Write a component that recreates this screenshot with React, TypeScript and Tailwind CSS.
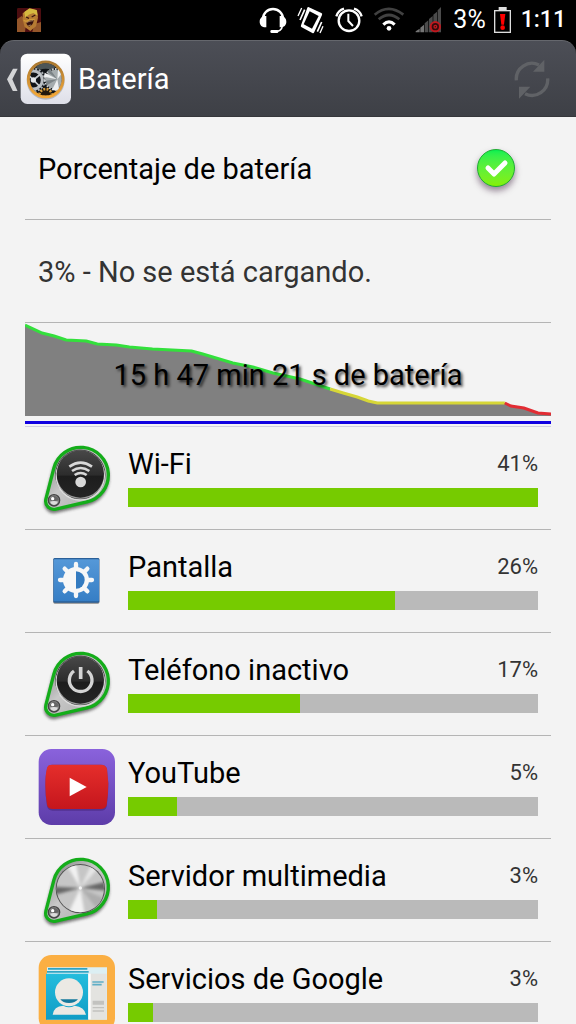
import { useState } from "react";
import type { ReactNode } from "react";

function BarbarianIcon() {
  return (
    <svg className="h-6 w-6" viewBox="0 0 72 72" aria-hidden="true">
      <rect width="72" height="72" rx="4" fill="#4c0d10" />
      <path d="M0 34 14 24 28 40 24 72H0zM52 48l20-6v30H46z" fill="#94562a" />
      <path d="M17 16 36 2l24 5 3 22-6 26-17 14-17-12-6-22z" fill="#b67b33" />
      <path d="M22 12 38 1l21 5 3 17-13-8-14 5-10 9z" fill="#d6b93f" />
      <path d="m27 27 9 4m8-4 11-6" stroke="#3a1610" strokeWidth="4" />
      <path d="M28 45q8-9 22-11 0 18-14 22-6-3-8-11z" fill="#35100d" />
      <path d="M30 43q9-5 18-5M34 53l8-2" stroke="#d9b886" strokeWidth="2" fill="none" />
      <path d="m20 37 7 3 12-5 14-1" stroke="#d09b39" strokeWidth="4" fill="none" />
    </svg>
  );
}

function HeadsetIcon() {
  return (
    <svg className="h-7 w-7" viewBox="22 18 84 84" fill="none" aria-hidden="true">
      <path d="M34 62V56a30 29 0 0 1 60 0v6" stroke="#fff" strokeWidth="7" />
      <path d="M44 48v34c-12 1-20-6-20-17s8-18 20-17zM84 48v34c12 1 20-6 20-17s-8-18-20-17z" fill="#fff" />
      <path d="M92 78q-2 17-24 17" stroke="#fff" strokeWidth="5" />
      <rect x="56" y="90" width="24" height="9" rx="4" fill="#fff" />
    </svg>
  );
}

function VibrateIcon() {
  return (
    <svg className="h-7 w-7" viewBox="136 18 84 84" fill="none" stroke="#fff" aria-hidden="true">
      <path d="m170 21 39 18q4 2 2 6l-23 51q-2 5-6 3l-32-17q-4-2-2-6l18-50q1-6 4-5z" fill="#fff" stroke="none" />
      <path d="m174 34 27 14-20 38-25-13z" fill="#000" stroke="none" />
      <path d="m145 60 14-31M197 95l13-29" strokeWidth="5" />
      <path d="m139 48 11-24M205 99l9-20" strokeWidth="4" />
    </svg>
  );
}

function AlarmIcon() {
  return (
    <svg className="h-7 w-7" viewBox="251 18 84 84" fill="none" stroke="#fff" aria-hidden="true">
      <circle cx="293" cy="62" r="31" strokeWidth="7" />
      <path d="M291 41v22l14 15" strokeWidth="6" />
      <path d="M255 49q5-17 23-23M308 26q18 6 23 23" strokeWidth="7" />
    </svg>
  );
}

function WifiStatusIcon() {
  return (
    <svg className="h-7 w-8" viewBox="358 15 96 84" fill="none" aria-hidden="true">
      <path d="M363 41q42-35 86 0M375 55q31-26 62 0" stroke="#414141" strokeWidth="8" />
      <path d="M389 71q17-17 34 0" stroke="#fff" strokeWidth="9" />
      <circle cx="406" cy="82" r="7" fill="#fff" />
    </svg>
  );
}

function SignalIcon() {
  return (
    <svg className="h-7 w-7" viewBox="482 15 84 84" aria-hidden="true">
      <path d="M484 94v-3l12-8v11zM498 94V80l11-9v23z" fill="#747474" />
      <path d="M511 94V67l11-9v36zM524 94V54l11-9v49zM537 94V41l11-9v62zM550 94V28l10-10v76z" fill="#4b4b4b" />
      <circle cx="543" cy="77" r="14" fill="#340b0b" stroke="#c0181f" strokeWidth="6" />
      <circle cx="543" cy="77" r="4" fill="none" stroke="#c0181f" strokeWidth="4" />
    </svg>
  );
}

function LowBatteryIcon() {
  return (
    <svg className="h-7 w-[19px]" viewBox="714 15 57 84" aria-hidden="true">
      <path d="M728 18h24v9h13v69h-51V27h14z" fill="#ddd" />
      <path d="M718 31h43v61h-43z" fill="#000" />
      <path d="M732 39h16l-4 32h-8z" fill="#f00" />
      <circle cx="740" cy="80" r="7" fill="#f00" />
    </svg>
  );
}

function SettingsLogo() {
  return (
    <svg className="h-[52px] w-[52px]" viewBox="60 157 156 156" aria-hidden="true">
      <defs>
        <linearGradient id="logo-bg" x2="0" y2="1">
          <stop stopColor="#fff" />
          <stop offset="1" stopColor="#dedfe8" />
        </linearGradient>
        <linearGradient id="gold" x2="0" y2="1">
          <stop stopColor="#a97831" />
          <stop offset="1" stopColor="#f4a838" />
        </linearGradient>
        <clipPath id="logo-face">
          <circle cx="137" cy="236" r="48" />
        </clipPath>
      </defs>
      <rect x="62" y="159" width="151" height="151" rx="20" fill="url(#logo-bg)" />
      <circle cx="137" cy="240" r="57" fill="#000" opacity=".2" />
      <circle cx="137" cy="236" r="52" fill="#101418" stroke="url(#gold)" strokeWidth="9" />
      <g clipPath="url(#logo-face)">
        <path d="M104 196q33-20 66 0l-14 12q-19-8-38 0z" fill="#4c5557" />
        <circle cx="100" cy="238" r="27" fill="none" stroke="#b9bec2" strokeWidth="9" />
        <circle cx="100" cy="238" r="34" fill="none" stroke="#a9afb3" strokeWidth="6" strokeDasharray="6 5" />
        <path d="m82 220 38 38M100 238l22-18" stroke="#c5cacd" strokeWidth="5" />
        <circle cx="100" cy="238" r="8" fill="#e4e7e9" />
        <circle cx="166" cy="236" r="29" fill="#a5acae" />
        <circle cx="166" cy="236" r="31" fill="none" stroke="#cdd1d3" strokeWidth="6" strokeDasharray="5 4" />
        <path d="m172 236-38-20-2 12zM172 236l-16 32 22 3zM172 236l18-24-16-8z" fill="#eef0f1" />
        <path d="m172 236-36 4 4 14zM172 236l-22-30-10 6z" fill="#7b8386" />
        <circle cx="137" cy="284" r="19" fill="#23190c" stroke="#d69d3d" strokeWidth="8" strokeDasharray="6 4" />
      </g>
    </svg>
  );
}

function SyncIcon() {
  return (
    <svg className="h-10 w-10" viewBox="767 176 120 120" fill="none" aria-hidden="true">
      <path d="M780 240A47 47 0 0 1 848 194M874 234A47 47 0 0 1 806 280" stroke="#606266" strokeWidth="10" />
      <path d="M864 178v36h-34zM788 295v-36h34z" fill="#606266" />
    </svg>
  );
}

function Knob({ id, dark, children }: { id: string; dark: boolean; children?: ReactNode }) {
  return (
    <svg className="size-full" viewBox="24 15 231 231" aria-hidden="true">
      <defs>
        <linearGradient id={`${id}-rim`} x2="1" y2="1">
          <stop stopColor="#777" />
          <stop offset=".45" stopColor="#c8c8c8" />
          <stop offset="1" stopColor="#a8a8a8" />
        </linearGradient>
        <linearGradient id={`${id}-cap`} x2="0" y2="1">
          <stop stopColor="#484848" />
          <stop offset=".52" stopColor="#2c2c2c" />
          <stop offset=".55" stopColor="#1d1d1d" />
          <stop offset="1" stopColor="#252525" />
        </linearGradient>
        <filter id={`${id}-soft`} x="-20%" y="-20%" width="140%" height="140%">
          <feGaussianBlur stdDeviation="5" />
        </filter>
        <clipPath id={`${id}-face`}>
          <circle cx="151" cy="125" r="71" />
        </clipPath>
      </defs>
      <path
        d="M71.6 104A83 83 0 1 1 170.7 208L77.6 230A25 25 0 0 1 47.8 198Z"
        fill="#333"
        stroke="#333"
        strokeWidth="8"
        opacity=".65"
        filter={`url(#${id}-soft)`}
      />
      <path
        d="M71.6 99.3A83 83 0 1 1 170.7 200.8L77.6 222.4A25 25 0 0 1 47.8 191.8Z"
        fill={`url(#${id}-rim)`}
        stroke="#14ad1a"
        strokeWidth="10"
        strokeLinejoin="round"
      />
      {dark ? (
        <>
          <circle cx="151" cy="119" r="74" fill="#999" stroke="#474747" strokeWidth="3" />
          <circle cx="151" cy="123" r="72" fill="none" stroke="#dedede" strokeWidth="4" />
          <circle cx="151" cy="117" r="71" fill={`url(#${id}-cap)`} />
        </>
      ) : (
        <>
          <circle cx="151" cy="125" r="74" fill="#555" />
          <g clipPath={`url(#${id}-face)`}>
            <circle cx="151" cy="125" r="73" fill="#c6c6c6" />
            <g filter={`url(#${id}-soft)`}>
              <path d="M151 123 70 119v26zM151 123l82-20v28z" fill="#666" />
              <path d="m151 123-48-80h34zM151 123l-40 85h54z" fill="#f2f2f2" />
              <path d="m151 123 38-82h36z" fill="#e6e6e6" />
              <path d="m151 123 74 32-18 38z" fill="#adadad" />
            </g>
            <circle cx="151" cy="123" r="5" fill="#fff" opacity=".8" />
          </g>
        </>
      )}
      <circle cx="72" cy="196" r="17" fill="#8a8a8a" stroke="#444" strokeWidth="4" />
      <path d="M58 196q6-14 16-13 10 1 13 13l-14 3z" fill="#666" />
      <path d="M60 200q12-4 24 0-3 9-12 10-9-1-12-10z" fill="#dcdcdc" />
      <circle cx="68" cy="191" r="5" fill="#fff" />
      {children}
    </svg>
  );
}

function WifiKnob() {
  return (
    <Knob id="wifi" dark>
      <g fill="none" stroke="#d8d8d8" strokeWidth="8">
        <path d="M118 95q34-24 68 0M126 108q26-18 52 0M134 120q18-12 36 0" />
      </g>
      <circle cx="152" cy="141" r="16" fill="#d8d8d8" />
    </Knob>
  );
}

function PowerKnob() {
  return (
    <Knob id="power" dark>
      <path d="M132 90a34 34 0 1 0 40 0" fill="none" stroke="#d4d4d4" strokeWidth="10" />
      <path d="M152 78v36" stroke="#d4d4d4" strokeWidth="11" />
    </Knob>
  );
}

function MediaKnob() {
  return <Knob id="media" dark={false} />;
}

function BrightnessIcon() {
  return (
    <svg className="size-full" viewBox="24 9 231 231" aria-hidden="true">
      <defs>
        <linearGradient id="bright" x2="0" y2="1">
          <stop stopColor="#5598d8" />
          <stop offset="1" stopColor="#367ec5" />
        </linearGradient>
      </defs>
      <rect x="70" y="56" width="138" height="135" rx="4" fill="#888" />
      <rect x="70" y="54" width="138" height="134" rx="4" fill="#2a5f98" />
      <rect x="71" y="58" width="136" height="126" rx="3" fill="url(#bright)" />
      <g stroke="#f7f7f7" strokeWidth="13" strokeLinecap="round">
        <path d="M138 72v96M90 120h96M104 86l68 68M172 86l-68 68" />
      </g>
      <circle cx="138" cy="120" r="39" fill="#f7f7f7" />
      <path d="M138 94a26 26 0 0 1 0 52z" fill="#347bc0" />
    </svg>
  );
}

function YouTubeIcon() {
  return (
    <svg className="size-full" viewBox="24 27 231 231" aria-hidden="true">
      <defs>
        <linearGradient id="yt-bg" x2="0" y2="1">
          <stop stopColor="#8a62dc" />
          <stop offset="1" stopColor="#5d3ca9" />
        </linearGradient>
        <linearGradient id="yt-red" x2="0" y2="1">
          <stop stopColor="#e52e2b" />
          <stop offset="1" stopColor="#c5161d" />
        </linearGradient>
      </defs>
      <rect x="26" y="27" width="229" height="228" rx="38" fill="url(#yt-bg)" />
      <path d="M52 84q2-10 15-10h146q14 0 18 12l4 46q0 34-5 68-3 12-18 12H68q-14 0-17-14-5-31-5-62t6-52z" fill="#40206f" opacity=".5" />
      <path d="M51 84q2-10 15-10h147q14 0 18 12l4 44q0 34-5 66-3 11-18 11H68q-14 0-17-13-5-28-5-60t5-50z" fill="url(#yt-red)" />
      <path d="m119 113 51 28-51 28z" fill="#fff" />
    </svg>
  );
}

function ContactsIcon() {
  return (
    <svg className="size-full" viewBox="24 45 231 231" aria-hidden="true">
      <defs>
        <linearGradient id="contact-blue" x2="0" y2="1">
          <stop stopColor="#24bddd" />
          <stop offset="1" stopColor="#109cc5" />
        </linearGradient>
      </defs>
      <rect x="26" y="45" width="229" height="228" rx="38" fill="#fbaf43" />
      <path d="M51 82h180v157H51z" fill="#dceff3" />
      <path d="M54 84h118v5H54zM51 93h125v5H51z" fill="#2fa5c4" />
      <path d="M48 101h127v138H48z" fill="url(#contact-blue)" />
      <path d="M175 101h55v137h-55z" fill="#e3e3e0" />
      <path d="M175 101h7v137h-7z" fill="#fff" />
      <circle cx="117" cy="157" r="42" fill="#ebe9e4" />
      <path d="M91 178h53q-8 11-27 11t-26-11z" fill="#14789c" />
      <path d="M68 224q3-25 32-27 17 9 34 0 29 3 34 27z" fill="#ebe9e4" />
      <path d="M187 126h34m-34 8h28" stroke="#5faec6" strokeWidth="5" />
      <path d="M188 182h34v12h-34zM188 201h34v4h-34zM188 211h34v4h-34z" fill="#c2c2bf" />
    </svg>
  );
}

function StatusBar() {
  return (
    <header className="flex h-10 shrink-0 items-center justify-between bg-black pr-[10px] pl-[17px] text-white">
      <BarbarianIcon />
      <div className="flex items-center gap-2">
        <div className="flex items-center gap-[10px]">
          <HeadsetIcon />
          <VibrateIcon />
          <AlarmIcon />
          <WifiStatusIcon />
          <SignalIcon />
          <span className="text-[25px] leading-8">3%</span>
        </div>
        <LowBatteryIcon />
        <span className="text-[23px] leading-8 font-medium">1:11</span>
      </div>
    </header>
  );
}

function TitleBar() {
  return (
    <div className="shrink-0 bg-black">
      <div className="flex h-[77px] items-center justify-between rounded-t-[14px] border-t border-b border-t-[#65676d] border-b-[#36373b] bg-linear-to-b from-[#4c4e56] to-[#3e4046] pr-6 pl-[6px]">
        <div className="flex items-center">
          <button type="button" aria-label="Atrás" className="flex items-center">
            <svg className="h-6 w-[14px]" viewBox="18 197 42 72" aria-hidden="true">
              <path d="M53 202H39L21 234l18 36h14l-16-36z" fill="#d3d4d6" />
            </svg>
            <SettingsLogo />
          </button>
          <h1 className="ml-[6px] text-[29px] leading-9 text-white">Batería</h1>
        </div>
        <button type="button" aria-label="Actualizar">
          <SyncIcon />
        </button>
      </div>
    </div>
  );
}

function PercentageToggle() {
  const [on, setOn] = useState(true);
  return (
    <label className="flex h-[103px] items-center justify-between border-b border-[#b4b4b4] pr-[35px] pl-[13px]">
      <span className="pt-[2px] text-[29px] leading-9 text-black">Porcentaje de batería</span>
      <span className="grid size-10 place-items-center">
        <input
          type="checkbox"
          checked={on}
          onChange={(e) => setOn(e.target.checked)}
          className="col-start-1 row-start-1 size-[38px] appearance-none rounded-full border border-[#8ea58e] bg-gray-300 shadow-[0_4px_6px_rgba(60,30,60,0.5)] checked:border-[#1cae30] checked:bg-linear-to-b checked:from-[#00f050] checked:to-[#84f000]"
        />
        {on && (
          <svg className="pointer-events-none col-start-1 row-start-1 size-10" viewBox="0 0 40 40" fill="none" aria-hidden="true">
            <path d="m12 20 6 6 11-11" stroke="#fff" strokeWidth="5" strokeLinecap="round" strokeLinejoin="round" />
          </svg>
        )}
      </span>
    </label>
  );
}

function HistoryChart() {
  return (
    <section className="grid border-b border-[#d0d0e0] pb-[2px]">
      <div className="col-start-1 row-start-1">
        <svg className="h-[93px] w-full" viewBox="0 0 524 93" preserveAspectRatio="none" fill="none" aria-hidden="true">
          <path
            d="M0 2 17 10 29 13 41 17 61 18 72 21 91 22 104 24 127 26 166 28 177 31 207 40 227 44 247 50 274 56 304 66 317 70 331 74 342 78 351 80H478L484 83 497 85 511 90 524 91V93H0z"
            fill="#808080"
          />
          <path
            d="M0 2 17 10 29 13 41 17 61 18 72 21 91 22 104 24 127 26 166 28 177 31 207 40 227 44 247 50 274 56 304 66"
            stroke="#33e03c"
            strokeWidth="3"
          />
          <path d="M304 66 317 70 331 74 342 78 351 80H478" stroke="#d6d637" strokeWidth="3" />
          <path d="M478 80 484 83 497 85 511 90 524 91" stroke="#e22c33" strokeWidth="3" />
        </svg>
        <div className="mt-[5px] h-[3px] bg-[#1000e0]" />
      </div>
      <p className="col-start-1 row-start-1 self-center pt-[3px] text-center text-[29px] leading-9 text-black [text-shadow:2px_2px_3px_rgba(0,0,0,0.7)]">
        15 h 47 min 21 s de batería
      </p>
    </section>
  );
}

type Usage = { name: string; percent: string; fill: number; icon: ReactNode };

const usages: Usage[] = [
  { name: "Wi-Fi", percent: "41%", fill: 100, icon: <WifiKnob /> },
  { name: "Pantalla", percent: "26%", fill: 65, icon: <BrightnessIcon /> },
  { name: "Teléfono inactivo", percent: "17%", fill: 42, icon: <PowerKnob /> },
  { name: "YouTube", percent: "5%", fill: 12, icon: <YouTubeIcon /> },
  { name: "Servidor multimedia", percent: "3%", fill: 7, icon: <MediaKnob /> },
  { name: "Servicios de Google", percent: "3%", fill: 6, icon: <ContactsIcon /> },
];

function UsageRow({ name, percent, fill, icon }: Usage) {
  return (
    <li className="flex gap-[13px] border-b border-[#b4b4b4] px-[13px] pt-[13px] pb-3">
      <div className="size-[77px] shrink-0">{icon}</div>
      <div className="min-w-0 flex-1">
        <div className="flex h-12 items-center justify-between">
          <h2 className="text-[29px] leading-9 text-black">{name}</h2>
          <span className="text-[22px] leading-7 text-[#333]">{percent}</span>
        </div>
        <div className="h-[19px] bg-[#bababa]">
          <div className="h-full bg-[#76cb00]" style={{ width: `${fill}%` }} />
        </div>
      </div>
    </li>
  );
}

export default function App() {
  return (
    <div className="flex h-screen flex-col overflow-hidden bg-[#f3f3f3] font-['Roboto',sans-serif]">
      <StatusBar />
      <TitleBar />
      <main className="min-h-0 flex-1 overflow-y-auto px-[25px] [scrollbar-width:none]">
        <PercentageToggle />
        <p className="flex h-[103px] items-center border-b border-[#b4b4b4] pt-[2px] pl-[13px] text-[29px] leading-9 text-[#333]">
          3% - No se está cargando.
        </p>
        <HistoryChart />
        <ul>
          {usages.map((usage) => (
            <UsageRow key={usage.name} {...usage} />
          ))}
        </ul>
      </main>
    </div>
  );
}
